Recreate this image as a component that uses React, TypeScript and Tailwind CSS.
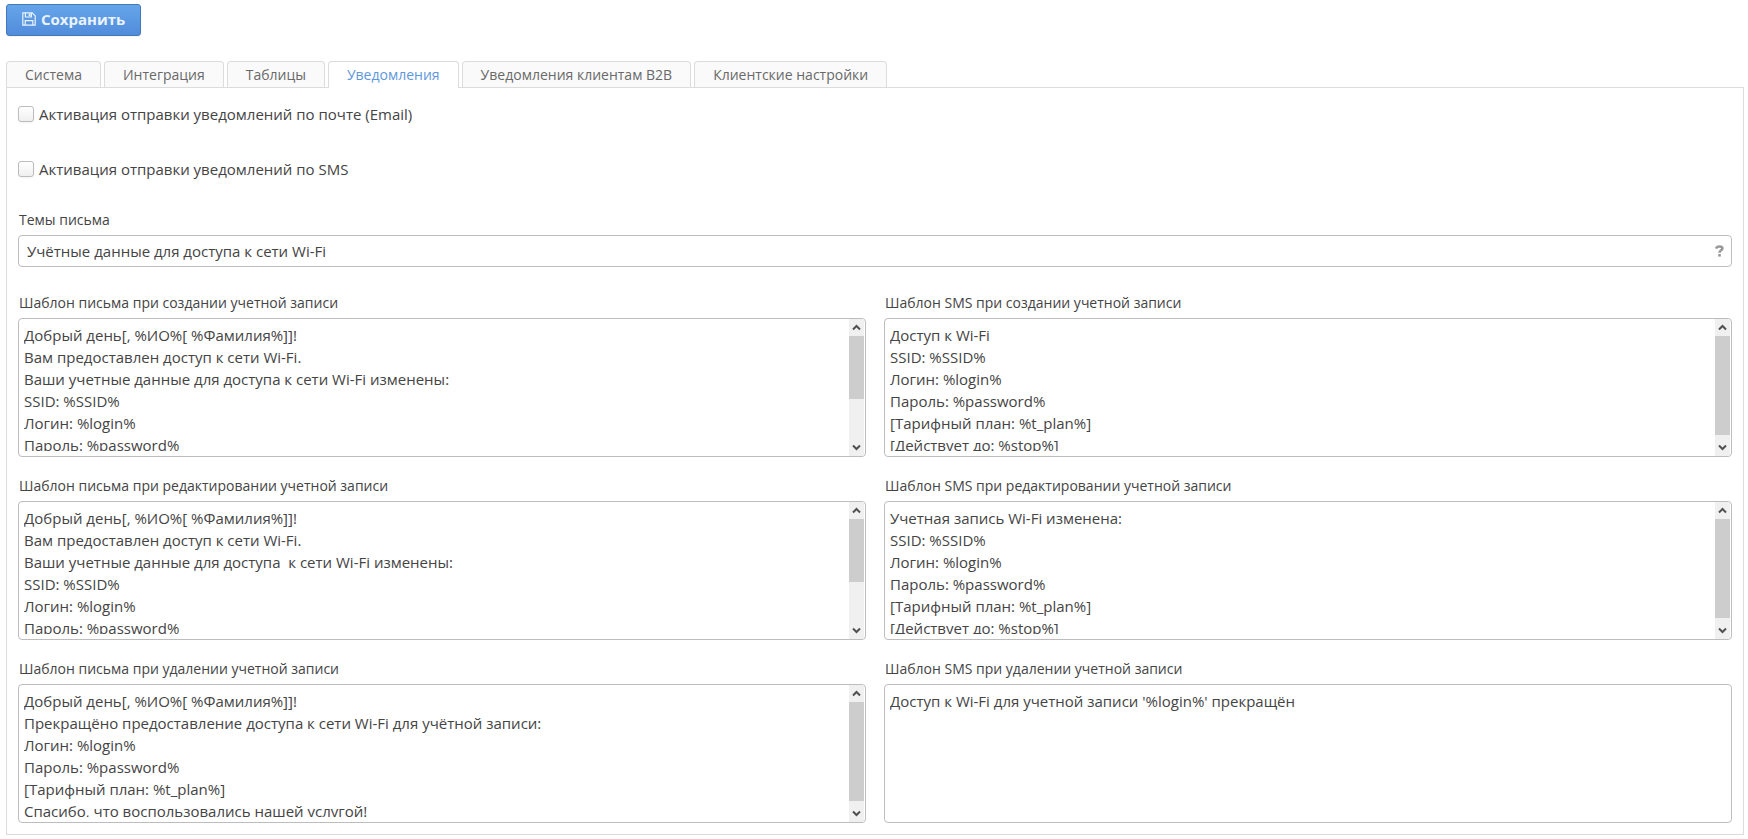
import React, { useId, useState } from 'react';

const TABS = [
  'Система',
  'Интеграция',
  'Таблицы',
  'Уведомления',
  'Уведомления клиентам B2B',
  'Клиентские настройки',
];

type Template = {
  label: string;
  text: string;
  thumb?: string;
};

const TEMPLATES: Template[] = [
  {
    label: 'Шаблон письма при создании учетной записи',
    text: 'Добрый день[, %ИО%[ %Фамилия%]]!\nВам предоставлен доступ к сети Wi-Fi.\nВаши учетные данные для доступа к сети Wi-Fi изменены:\nSSID: %SSID%\nЛогин: %login%\nПароль: %password%',
    thumb: 'h-[63px]',
  },
  {
    label: 'Шаблон SMS при создании учетной записи',
    text: 'Доступ к Wi-Fi\nSSID: %SSID%\nЛогин: %login%\nПароль: %password%\n[Тарифный план: %t_plan%]\n[Действует до: %stop%]',
    thumb: 'h-[99px]',
  },
  {
    label: 'Шаблон письма при редактировании учетной записи',
    text: 'Добрый день[, %ИО%[ %Фамилия%]]!\nВам предоставлен доступ к сети Wi-Fi.\nВаши учетные данные для доступа  к сети Wi-Fi изменены:\nSSID: %SSID%\nЛогин: %login%\nПароль: %password%',
    thumb: 'h-[63px]',
  },
  {
    label: 'Шаблон SMS при редактировании учетной записи',
    text: 'Учетная запись Wi-Fi изменена:\nSSID: %SSID%\nЛогин: %login%\nПароль: %password%\n[Тарифный план: %t_plan%]\n[Действует до: %stop%]',
    thumb: 'h-[99px]',
  },
  {
    label: 'Шаблон письма при удалении учетной записи',
    text: 'Добрый день[, %ИО%[ %Фамилия%]]!\nПрекращёно предоставление доступа к сети Wi-Fi для учётной записи:\nЛогин: %login%\nПароль: %password%\n[Тарифный план: %t_plan%]\nСпасибо, что воспользовались нашей услугой!',
    thumb: 'h-[99px]',
  },
  {
    label: 'Шаблон SMS при удалении учетной записи',
    text: "Доступ к Wi-Fi для учетной записи '%login%' прекращён",
  },
];

const SaveIcon = () => (
  <svg width="14" height="14" viewBox="0 0 14 14" fill="none" stroke="currentColor" strokeWidth="1.2" aria-hidden="true">
    <path d="M.8.8h9.4l3 3v9.4H.8z" strokeLinejoin="round" />
    <path d="M3.4 1v4h6V1M3.2 13V8.6h7.6V13" />
    <path d="M7.6 1.6v2.6" strokeWidth="1.8" />
  </svg>
);

const HelpIcon = () => (
  <svg width="9" height="12" viewBox="0 0 9 12" fill="none" stroke="#999" strokeWidth="2.6" aria-hidden="true">
    <path d="M1 3.6C1.5 2.2 2.8 1.5 4.4 1.5c1.8 0 3 .8 3 2.1 0 1.7-2.9 1.8-2.9 4.1" />
    <path d="M4.5 9v2.6" />
  </svg>
);

const ScrollArrow = ({ down = false }: { down?: boolean }) => (
  <span className="flex h-[17px] items-center justify-center">
    <svg width="9" height="7" viewBox="0 0 9 7" fill="none" stroke="#505050" strokeWidth="2">
      <path d={down ? 'M1 1.5l3.5 3.5L8 1.5' : 'M1 5.5L4.5 2 8 5.5'} />
    </svg>
  </span>
);

const Checkbox = ({ label }: { label: string }) => (
  <label className="flex h-[22px] w-fit items-center gap-[5px] text-[15px] leading-[22px]">
    <input
      type="checkbox"
      className="h-4 w-4 appearance-none rounded-[3px] border border-[#bcbcbc] bg-linear-to-b from-white to-[#efefef] shadow-xs checked:bg-[#5792df]"
    />
    {label}
  </label>
);

const TemplateField = ({ label, text, thumb }: Template) => {
  const id = useId();
  const [value, setValue] = useState(text);

  return (
    <div className="min-w-0">
      <label htmlFor={id} className="block pl-px text-sm leading-5">{label}</label>
      <div className="mt-[5px] flex h-[139px] overflow-hidden rounded border border-[#bdbdbd] bg-white pr-px">
        <textarea
          id={id}
          value={value}
          onChange={(e) => setValue(e.target.value)}
          className="my-[5px] ml-[5px] min-w-0 flex-1 resize-none text-[15px] leading-[22px] outline-none [scrollbar-width:none]"
        />
        {thumb && (
          <div className="flex w-[15px] flex-col bg-[#f0f0f0]" aria-hidden="true">
            <ScrollArrow />
            <div className={`bg-[#cdcdcd] ${thumb}`} />
            <div className="flex-1" />
            <ScrollArrow down />
          </div>
        )}
      </div>
    </div>
  );
};

export default function App() {
  const [activeTab, setActiveTab] = useState('Уведомления');
  const [subject, setSubject] = useState('Учётные данные для доступа к сети Wi-Fi');

  return (
    <div className="bg-white pt-1 pr-1 pl-1.5 font-['Open_Sans','Noto_Sans',sans-serif] text-[#444]">
      <button
        type="button"
        className="flex h-8 items-center gap-[5px] rounded-[3px] border border-[#4478b8] bg-linear-to-b from-[#66a5ea] to-[#518cdb] px-[15px] pb-0.5 text-[15px] leading-5 font-bold text-[#e9f3ff] shadow-xs"
      >
        <SaveIcon />
        Сохранить
      </button>

      <div role="tablist" className="mt-[25px] flex gap-[3px]">
        {TABS.map((tab) => (
          <button
            key={tab}
            type="button"
            role="tab"
            aria-selected={tab === activeTab}
            onClick={() => setActiveTab(tab)}
            className={`relative rounded-t border border-b-0 border-[#dcdcdc] px-[18px] pt-[3px] text-sm leading-5 ${
              tab === activeTab ? '-mb-px h-[27px] bg-white pb-[3px] text-[#5f98dc]' : 'h-[26px] bg-[#fafafa] pb-0.5 text-[#696969]'
            }`}
          >
            {tab}
          </button>
        ))}
      </div>

      <main className="border border-[#dcdcdc] px-[11px] pt-[15px] pb-[11px]">
        <Checkbox label="Активация отправки уведомлений по почте (Email)" />
        <div className="mt-[33px]">
          <Checkbox label="Активация отправки уведомлений по SMS" />
        </div>

        <label htmlFor="subject" className="mt-[30px] block pl-px text-sm leading-5">Темы письма</label>
        <div className="mt-[5px] flex h-8 items-center rounded border border-[#bdbdbd] bg-white pr-[7px] pl-2">
          <input
            id="subject"
            type="text"
            value={subject}
            onChange={(e) => setSubject(e.target.value)}
            className="min-w-0 flex-1 text-[15px] leading-[22px] outline-none"
          />
          <HelpIcon />
        </div>

        <div className="mt-[26px] grid grid-cols-2 gap-x-[18px] gap-y-[19px]">
          {TEMPLATES.map((template) => (
            <TemplateField key={template.label} {...template} />
          ))}
        </div>
      </main>
    </div>
  );
}
